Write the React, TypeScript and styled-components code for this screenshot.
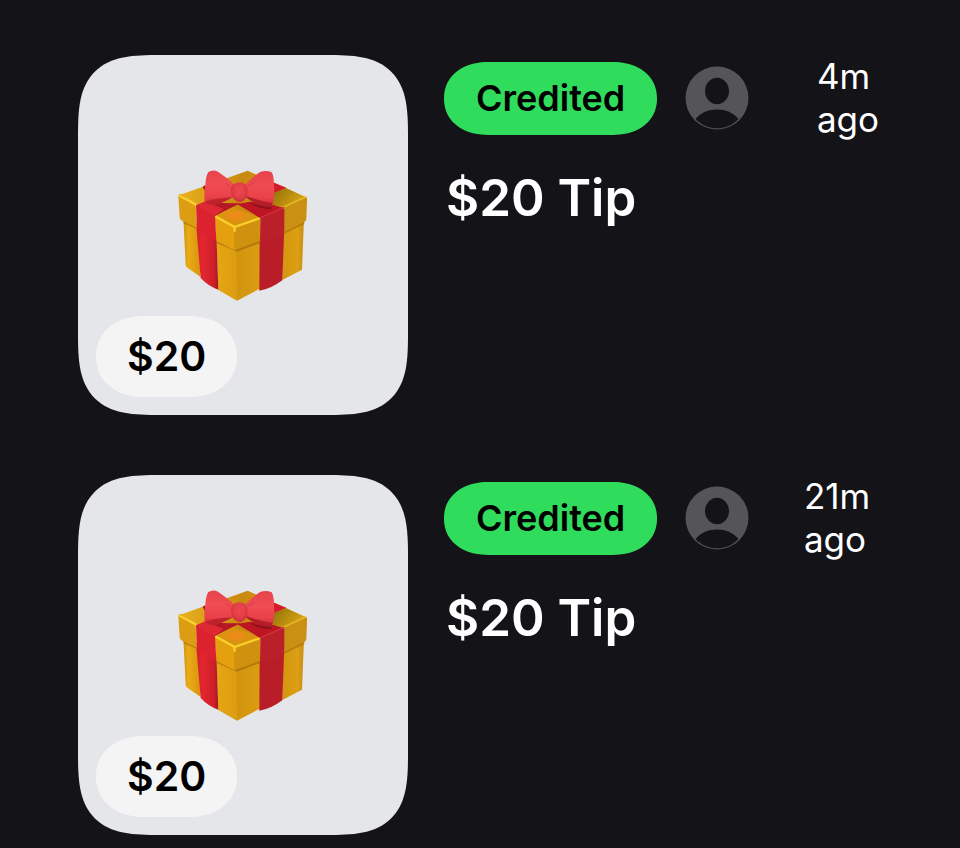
import React, { useId } from "react";
import styled, { createGlobalStyle } from "styled-components";

const GlobalStyle = createGlobalStyle`
  *, *::before, *::after { box-sizing: border-box; }
  html { background: #141318; }
  body {
    margin: 0;
    background: #141318;
    color: #fff;
    font-family: Inter, "Liberation Sans", sans-serif;
  }
`;

const List = styled.ul`
  display: flex;
  flex-direction: column;
  gap: 60px;
  margin: 0;
  padding: 55px 80px 12px 78px;
  list-style: none;
`;

const Item = styled.li`
  display: flex;
  gap: 36px;
`;

const Thumbnail = styled.div`
  position: relative;
  display: flex;
  align-items: center;
  justify-content: center;
  flex: none;
  width: 330px;
  height: 360px;
  border-radius: 60px;
  background: #e5e6ea;

  @supports (corner-shape: superellipse(1.6)) {
    border-radius: 82px;
    corner-shape: superellipse(1.6);
  }
`;

const Price = styled.span`
  position: absolute;
  left: 18px;
  bottom: 18px;
  padding: 15px 31px;
  border-radius: 40px;
  background: #f4f4f4;
  color: #000;
  font-size: 41px;
  font-weight: 600;
  line-height: 51px;

  @supports (corner-shape: superellipse(1.1)) {
    border-radius: 48px / 40px;
    corner-shape: superellipse(1.1);
  }
`;

const Details = styled.div`
  flex: 1;
  min-width: 0;
`;

const Meta = styled.div`
  display: flex;
  align-items: center;
`;

const Status = styled.span`
  margin-right: 28px;
  padding: 14px 32px;
  border-radius: 37px;
  background: #30dc5b;
  color: #000;
  font-size: 36px;
  font-weight: 600;
  line-height: 45px;

  @supports (corner-shape: superellipse(1.1)) {
    border-radius: 44px / 36px;
    corner-shape: superellipse(1.1);
  }
`;

const Time = styled.time`
  margin-left: auto;
  font-size: 35px;
  line-height: 43px;
  white-space: pre;
`;

const Title = styled.h2`
  margin: 24px 0 0 2px;
  font-size: 51px;
  font-weight: 600;
  line-height: 65px;
`;

function Avatar() {
  return (
    <svg width="64" height="64" viewBox="0 0 64 64" role="img" aria-label="Sender">
      <circle cx="32" cy="32" r="31.5" fill="#555557" />
      <ellipse cx="32" cy="25" rx="12" ry="13.2" fill="#141318" />
      <path d="M10.5 53C16 46.5 23.500 43.500 32 43.500S48 46.500 53.500 53C47.500 59.300 40 62.300 32 62.300S16.500 59.300 10.500 53Z" fill="#141318" />
    </svg>
  );
}

function Gift() {
  const id = useId();
  const ref = (name: string) => `url(#${id}${name})`;
  return (
    <svg width="132" height="134" viewBox="50 40 396 402" role="img" aria-label="Gift">
      <defs>
        <linearGradient id={`${id}left`} x1="0" x2="1">
          <stop offset="0" stopColor="#cf9514" />
          <stop offset="0.3" stopColor="#eaab16" />
          <stop offset="1" stopColor="#d8930f" />
        </linearGradient>
        <linearGradient id={`${id}side`} x1="0" x2="1">
          <stop offset="0" stopColor="#d3960f" />
          <stop offset="0.7" stopColor="#dd9f14" />
          <stop offset="1" stopColor="#c88d12" />
        </linearGradient>
        <linearGradient id={`${id}right`} x1="0" x2="1">
          <stop offset="0" stopColor="#d2940f" />
          <stop offset="1" stopColor="#dc9d12" />
        </linearGradient>
        <linearGradient id={`${id}front`} x1="0" x2="1">
          <stop offset="0" stopColor="#e6a714" />
          <stop offset="1" stopColor="#dc9c11" />
        </linearGradient>
        <linearGradient id={`${id}top`} x1="0" x2="1">
          <stop offset="0" stopColor="#e8b01c" />
          <stop offset="0.5" stopColor="#c98910" />
          <stop offset="1" stopColor="#d9a213" />
        </linearGradient>
        <linearGradient id={`${id}band`} x1="0" x2="1">
          <stop offset="0" stopColor="#d42029" />
          <stop offset="0.3" stopColor="#e3262f" />
          <stop offset="0.8" stopColor="#cf1f29" />
          <stop offset="1" stopColor="#a51822" />
        </linearGradient>
        <radialGradient id={`${id}glow`}>
          <stop offset="0" stopColor="#f5871a" />
          <stop offset="1" stopColor="#f5871a" stopOpacity="0" />
        </radialGradient>
        <linearGradient id={`${id}shade`} x1="0" y1="0" x2="1" y2="0.5">
          <stop offset="0" stopColor="#8d7008" />
          <stop offset="1" stopColor="#d9a213" />
        </linearGradient>
        <linearGradient id={`${id}bow`} x1="0" y1="0" x2="0" y2="1">
          <stop offset="0" stopColor="#e6434c" />
          <stop offset="0.45" stopColor="#f04c54" />
          <stop offset="0.8" stopColor="#ea414a" />
          <stop offset="1" stopColor="#d6323d" />
        </linearGradient>
        <radialGradient id={`${id}knot`} cx="0.5" cy="0.4">
          <stop offset="0" stopColor="#ec4850" />
          <stop offset="0.7" stopColor="#e43f48" />
          <stop offset="1" stopColor="#d2343f" />
        </radialGradient>
      </defs>

      <path d="M69 190L120 214V366L82 340Q76 336 76 330Z" fill={ref("left")} />
      <path d="M168 250L230 280V438L174 406Z" fill={ref("front")} />
      <path d="M229 275L302 250V400L230 438Z" fill={ref("right")} />
      <path d="M366 230L431 190L425 345L366 376Z" fill={ref("side")} />
      <path d="M107 205L168 235L174 405Q144 395 121 370Z" fill={ref("band")} />
      <path d="M298 250L372 215L366 377Q330 404 297 408Z" fill="#b91e28" />

      <path d="M69 200L108 216V222L70 206ZM168 258L221 285L302 257V264L230 291L169 265ZM370 231L432 202V208L370 238Z" fill="#9c6806" opacity="0.6" />

      <path d="M60 120L262 48L433 126L230 218Z" fill={ref("top")} />
      <path d="M54 124Q54 118 62 118L106 150L110 219L65 198Q58 194 58 188Z" fill="#dc9d13" />
      <path d="M163 184L224 215L224 287L168 258Z" fill="#e4a00f" />
      <path d="M222 215L300 190V258L222 287Z" fill="#cf910e" />
      <path d="M370 158L438 128Q442 131 440 137L438 194Q437 200 431 203L370 232Z" fill="#ca9013" />
      <path d="M338 115L376 100L433 126L370 157L338 149Z" fill={ref("shade")} />
      <path d="M163 184L218 158L300 189L223 217Z" fill="#d8940f" />
      <ellipse cx="228" cy="183" rx="44" ry="20" fill={ref("glow")} />
      <path d="M58 123L107 150M163 184L223 217L300 190M223 217V228" fill="none" stroke="#fbd02a" strokeWidth="7" strokeLinecap="round" strokeLinejoin="round" />
      <path d="M370 157L436 127" fill="none" stroke="#e5b51f" strokeWidth="5" strokeLinecap="round" />

      <path d="M107 152L145 136L220 151L164 184L168 260L110 226Z" fill="#dc222e" />
      <path d="M145 145L240 146L162 184L148 170Z" fill="#b51824" />
      <path d="M107 152L135 142L190 163L162 184Z" fill="#de2934" />
      <path d="M231 148L275 143L340 150L372 162V223L370 244L299 264L300 190Z" fill="#bb1f29" />
      <path d="M231 148L270 141L330 150L370 159L300 190Z" fill="#bd1622" />
      <path d="M330 80L378 99L340 115Z" fill="#d31b2b" />
      <path d="M265 141Q290 155 334 155L334 163Q290 165 265 141Z" fill="#8d141e" />
      <path d="M298 190L372 158" stroke="#cf353f" strokeWidth="4" />
      <path d="M127 96L135 91V112Z" fill="#a91923" />

      <path d="M144 52Q158 43 173 51Q195 66 214 82Q226 92 220 128Q196 139 167 144Q140 147 133 143Q130 120 135 91Q136 66 144 52Z" fill={ref("bow")} />
      <path d="M134 141Q166 131 216 128Q194 143 162 151Q143 151 134 141Z" fill="#bd222e" />
      <path d="M256 88Q279 66 299 52Q318 45 334 53Q341 65 341 91Q344 124 337 148Q299 149 259 127Q250 105 256 88Z" fill={ref("bow")} />
      <path d="M258 124Q291 137 337 145L333 157Q289 153 258 129Z" fill="#b31e2a" />
      <path d="M197 86Q205 93 211 96M263 94Q276 89 283 82" stroke="#d2343f" strokeWidth="4" fill="none" opacity="0.5" />
      <path d="M217 90Q235 76 254 88Q265 98 261 118Q258 138 239 143Q220 140 214 122Q209 102 217 90Z" fill={ref("knot")} />
    </svg>
  );
}

const tips = [
  { id: 1, amount: "$20", status: "Credited", age: "4m" },
  { id: 2, amount: "$20", status: "Credited", age: "21m" },
];

export default function App() {
  return (
    <>
      <GlobalStyle />
      <List>
        {tips.map((tip) => (
          <Item key={tip.id}>
            <Thumbnail>
              <Gift />
              <Price>{tip.amount}</Price>
            </Thumbnail>
            <Details>
              <Meta>
                <Status>{tip.status}</Status>
                <Avatar />
                <Time>{`${tip.age} \nago`}</Time>
              </Meta>
              <Title>{tip.amount} Tip</Title>
            </Details>
          </Item>
        ))}
      </List>
    </>
  );
}
